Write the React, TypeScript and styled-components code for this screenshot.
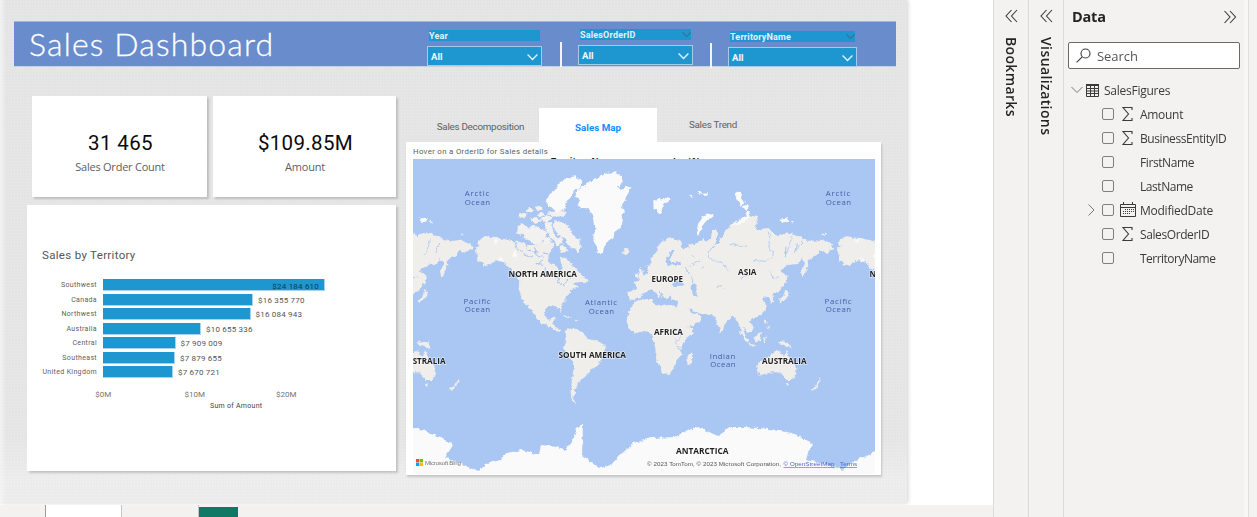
import React from "react";
import styled, { createGlobalStyle } from "styled-components";

const DIN = `Roboto, "Noto Sans", sans-serif`;
const UI = `"Open Sans", "Noto Sans", sans-serif`;

const GlobalStyle = createGlobalStyle`
  * { box-sizing: border-box; }
  body { margin: 0; overflow: hidden; background: #fff; font-family: ${UI}; }
`;

const Shell = styled.div`
  width: 1257px;
  height: 517px;
  display: flex;
  overflow: hidden;
  background: #f3f2f1;
`;

const Workspace = styled.main`
  width: 993px;
  height: 517px;
  display: flex;
  flex-direction: column;
  background: #fff;
`;

const ReportPage = styled.div`
  width: 907px;
  height: 503px;
  flex: none;
  padding-top: 22px;
  background:
    linear-gradient(90deg, #f3f3f3 0, rgba(235, 235, 235, 0) 6px),
    radial-gradient(circle at 1px 1px, rgba(0, 0, 0, 0.015) 0.6px, transparent 1px) 0 0 / 3px 3px,
    linear-gradient(#e6e6e6 0, #e7e7e7 440px, #eeeeee 480px, #ededed 503px);
  box-shadow: 1px 0 4px rgba(0, 0, 0, 0.18);
`;

const Banner = styled.header`
  display: flex;
  align-items: flex-start;
  width: 882px;
  height: 44px;
  margin-left: 14px;
  background: #698ccd;
  box-shadow: 0 -1px 0 #a3b4d8, 0 1px 0 #c9d0e0;
`;

const Title = styled.h1`
  width: 413px;
  margin: 0;
  padding-left: 15px;
  font: 300 32px/44px Lato, sans-serif;
  letter-spacing: 1.15px;
  color: #fff;
  white-space: nowrap;
  -webkit-text-stroke: 0.3px #fff;
`;

const Slicer = styled.div<{ $w: number; $top: number }>`
  display: flex;
  flex-direction: column;
  gap: 5px;
  width: ${(p) => p.$w}px;
  padding-top: ${(p) => p.$top}px;
`;

const SlicerLabel = styled.div`
  display: flex;
  justify-content: space-between;
  align-items: center;
  height: 11px;
  margin: 0 2px;
  background: #1e96d0;
  font: 700 9px/12px ${DIN};
  letter-spacing: 0.18px;
  color: #e4f1f8;
`;

const SlicerBox = styled.div`
  display: flex;
  justify-content: space-between;
  align-items: center;
  height: 20px;
  padding: 1px 3px 0;
  border: 1px solid #a5cbe9;
  background: #1e96d0;
  font: 700 9.5px/18px ${DIN};
  letter-spacing: 0.1px;
  color: #f2f9fd;
`;

const Divider = styled.div<{ $top: number; $before: number }>`
  width: 2px;
  height: 25px;
  margin: ${(p) => p.$top}px 16px 0 ${(p) => p.$before}px;
  flex: none;
  background: #f3f5fa;
`;

const Body = styled.div`
  display: flex;
  gap: 10px;
  padding: 30px 0 0 27px;
`;

const LeftColumn = styled.section`
  width: 369px;
`;

const CardRow = styled.div`
  display: flex;
  justify-content: space-between;
  padding-left: 5px;
  margin-bottom: 8px;
`;

const Card = styled.div<{ $w: number }>`
  width: ${(p) => p.$w}px;
  height: 101px;
  padding-top: 34px;
  text-align: center;
  background: #fff;
  box-shadow: 2px 2px 2px rgba(0, 0, 0, 0.17);
`;

const CardValue = styled.div`
  font: 400 20.5px/26px ${DIN};
  letter-spacing: 0.35px;
  padding-left: 2px;
  color: #0a0a0a;
`;

const CardLabel = styled.div`
  font: 400 11px/15px ${UI};
  margin-top: 3px;
  padding-left: 1px;
  letter-spacing: -0.23px;
  color: #606060;
`;

const ChartCard = styled.div`
  height: 266px;
  padding: 42px 11px 0 15px;
  background: #fff;
  box-shadow: 2px 2px 2px rgba(0, 0, 0, 0.17);
`;

const ChartTitle = styled.h2`
  margin: 0;
  font: 400 11.5px/16px ${DIN};
  letter-spacing: 0.32px;
  color: #555;
`;

const Plot = styled.div`
  display: flex;
  justify-content: space-between;
  margin-top: 7px;
`;

const Bars = styled.div`
  padding-top: 8px;
`;

const BarRow = styled.div`
  display: grid;
  grid-template-columns: 55px auto 80px;
  column-gap: 6px;
  justify-content: start;
  align-items: center;
  height: 14.5px;
`;

const Category = styled.span`
  justify-self: end;
  font: 400 7px/12px ${DIN};
  letter-spacing: 0.34px;
  color: #606060;
  white-space: nowrap;
`;

const Bar = styled.div`
  display: flex;
  justify-content: flex-end;
  align-items: center;
  height: 12px;
  border: solid #a9d3ea;
  border-width: 0 1px 1px 0;
  background: #1e96d0;
  padding: 3px 5px 0 0;
`;

const Amount = styled.span<{ $inside?: boolean }>`
  font: 400 8px/11px ${DIN};
  letter-spacing: 0.2px;
  padding-top: ${(p) => (p.$inside ? 0 : 1)}px;
  margin-left: -1px;
  white-space: nowrap;
  color: ${(p) => (p.$inside ? "#0d3d58" : "#555")};
`;

const ScrollTrack = styled.div`
  width: 5px;
  height: 116px;
  border-radius: 3px;
  background: #efefef;
`;

const ScrollThumb = styled.div`
  height: 80px;
  border-radius: 3px;
  background: #b5b5b5;
`;

const Axis = styled.div`
  display: flex;
  margin: 3px 0 0 38px;
  font: 400 8px/11px ${DIN};
  letter-spacing: 0.05px;
  color: #757575;
  span { width: 91.5px; text-align: center; margin-left: -22.5px; margin-right: 22.5px; }
`;

const AxisTitle = styled.div`
  margin: 0 0 0 168px;
  font: 400 7px/12px ${DIN};
  letter-spacing: 0.28px;
  color: #444;
`;

const RightColumn = styled.section`
  width: 475px;
  padding-top: 12px;
`;

const Tabs = styled.nav`
  display: flex;
  height: 34px;
  padding-left: 16px;
`;

const Tab = styled.div<{ $w: number; $top: number; $active?: boolean }>`
  width: ${(p) => p.$w}px;
  padding-top: ${(p) => p.$top}px;
  text-align: center;
  font: ${(p) => (p.$active ? 700 : 400)} 9.8px/14px ${DIN};
  letter-spacing: ${(p) => (p.$active ? 0 : -0.25)}px;
  color: ${(p) => (p.$active ? "#118dff" : "#606060")};
  background: ${(p) => (p.$active ? "#fff" : "transparent")};
`;

const MapCard = styled.div`
  height: 333px;
  padding: 5px 6px 0 7px;
  background: #fff;
  box-shadow: 1px 2px 2px rgba(0, 0, 0, 0.17);
`;

const HintRow = styled.div`
  height: 10px;
  font: 400 7.8px/9px ${DIN};
  letter-spacing: 0.33px;
  color: #606060;
`;

const ClippedHeads = styled.div`
  display: flex;
  height: 2px;
  overflow: hidden;
  padding-left: 138px;
  font: 700 9px/7px ${UI};
  color: #222;
  span { width: 122px; }
`;

const MapSvg = styled.svg`
  display: block;
  width: 462px;
  height: 315px;
`;

const PageTabs = styled.footer`
  display: flex;
  height: 12px;
  margin-top: 2px;
  padding-left: 45px;
  background: #f3f2f1;
`;

const PageTab = styled.div<{ $w: number; $active?: boolean }>`
  width: ${(p) => p.$w}px;
  border-left: 1px solid ${(p) => (p.$active ? "#9d9b99" : "#c8c6c4")};
  background: ${(p) => (p.$active ? "#fff" : "#f3f2f1")};
`;

const AddPage = styled.div`
  width: 39px;
  height: 10px;
  margin-top: 2px;
  background: #117865;
`;

const Rail = styled.aside`
  display: flex;
  flex-direction: column;
  align-items: center;
  width: 35px;
  padding-top: 9px;
  gap: 14px;
  border-left: 1px solid #dddbd9;
  background: #f3f2f1;
`;

const RailText = styled.span<{ $ls: number }>`
  writing-mode: vertical-rl;
  font: 600 14px/18px ${UI};
  letter-spacing: ${(p) => p.$ls}px;
  color: #252423;
`;

const DataPane = styled.aside`
  width: 186px;
  border-left: 1px solid #dddbd9;
  border-right: 1px solid #e1dfdd;
  padding: 9px 0 0 4px;
  background: linear-gradient(90deg, #f3f2f1 180px, #f8f7f7 180px);
`;

const PaneHead = styled.div`
  display: flex;
  justify-content: space-between;
  align-items: center;
  height: 15px;
  padding: 0 11px 0 4px;
  font: 700 14.5px/16px ${UI};
  letter-spacing: -0.2px;
  color: #252423;
`;

const SearchBox = styled.div`
  display: flex;
  align-items: center;
  gap: 6px;
  width: 172px;
  height: 27px;
  margin: 18px 0 9px;
  padding-left: 7px;
  border: 1px solid #6b6967;
  border-radius: 2px;
  background: #fff;
  font: 400 13px/24px ${UI};
  letter-spacing: -0.05px;
  color: #555;
`;

const Row = styled.div`
  display: grid;
  grid-template-columns: 17px 18px 20px auto;
  align-items: center;
  height: 24px;
  padding-left: 17px;
  font: 400 12px/22px ${UI};
  color: #3b3a39;
`;

const TableRow = styled(Row)`
  grid-template-columns: 15px 18px auto;
  padding-left: 3px;
`;

const Label = styled.span<{ $ls: number }>`
  padding-top: 2px;
  letter-spacing: ${(p) => p.$ls}px;
`;

const Check = styled.span`
  width: 12px;
  height: 12px;
  border: 1px solid #807e7c;
  border-radius: 2px;
`;

const Chevrons = ({ right }: { right?: boolean }) => (
  <svg width="14" height="14" viewBox="0 0 14 14" fill="none" stroke="#3b3a39" strokeWidth="1.1">
    <path d={right ? "M1.500 1l5.500 6-5.500 6M7 1l5.500 6L7 13" : "M13 1L7.500 7l5.500 6M7.500 1L2 7l5.500 6"} />
  </svg>
);

const Caret = ({ dim }: { dim?: boolean }) => (
  <svg width={dim ? 9 : 11} height={dim ? 7 : 8} viewBox="0 0 11 8" fill="none" stroke={dim ? "#3f6c8a" : "#e6f4fb"} strokeWidth="1.3">
    <path d="M.6 1.500l4.900 5 4.900-5" />
  </svg>
);

const Sigma = () => (
  <svg width="14" height="16" viewBox="0 0 14 16" fill="none" stroke="#3b3a39" strokeWidth="1.1">
    <path d="M12 4V1.500H3L8.500 8 3 14.500h9V12" />
  </svg>
);

const Calendar = () => (
  <svg width="17" height="16" viewBox="0 0 17 16" fill="none" stroke="#3b3a39">
    <path d="M.5 2.500h15v12H.5zM.5 5.500h15M3.500 0v3M12.500 0v3" />
    <path d="M5 7.500h9M3 9.500h11M3 11.500h8" strokeDasharray="1 1" />
  </svg>
);

const TableIcon = () => (
  <svg width="13" height="13" viewBox="0 0 13 13" fill="none" stroke="#3b3a39">
    <path d="M.5 1h12v11.500H.5zM.5 4.500h12M.5 7h12M.5 9.500h12M4.500 1v11.500M8.500 1v11.500" />
    <path d="M0 1h13" strokeWidth="2" />
  </svg>
);

const SearchIcon = () => (
  <svg width="15" height="15" viewBox="0 0 15 15" fill="none" stroke="#3b3a39" strokeWidth="1.1">
    <circle cx="9.500" cy="5.500" r="4.500" />
    <path d="M6.200 8.800L.6 14.300" />
  </svg>
);

/* Western hemisphere, drawn at three units per map pixel. */
const WEST_LAND = [
  "M212 297l12-8-9-12 14-14 14-5 18 5 24 1 36 9 28 3 15 9 24 0 22-6 14-10 8 14 11-9 5 13-10 16-8 16 3 20 20 5 7 15 8 4 3-19-7-20 15-1 15 10 10 12 15 15 20 24-8 12-28 2 20 14-21 5-10 11-6 15-8 9-9 14 2 21-6-8-9-11-24 1-11 9-1 18 10 14 10-6 11-5-4 15-6 6 8 9 12 5 5 12-10-3-16-8-20-12-14-4-11-13-14-25-18-17-12-18-8-20 3-30-14-25-21-20-10-15-14-6-16 4-20 11-24 6 9-14-21-6 4-11z",
  "M482 541l13-6 20 3 16 7 14 17 17 7 23 8 20 12-5 17-10 25-14 15-16 15-15 15-11 10-14 10-8 24-7 20 8 22-12-7-4-30 4-35 5-30-2-25-18-20-10-25 7-25z",
  "M651 305l8-8 14 1 3 9-12 8-12-3z",
  "M470 495l18 3 14 7-14-1zM508 506l12 1 4 4-12 0zM532 380l14 4 6 12-12 4-12-9z",
];
const ARCTIC_ISLES = [
  "M337 232l14-12 15 9 5 12 17 7-9 10-25-2-17-5zM356 246l24-19 24 4 12 20-4 28-22 5-17-13-20-4z",
  "M340 198l16-11 12 6-10 12zM362 180l14-7 13 6-13 11zM370 208l24-8 18 10-20 12zM390 172l16-7 8 11-16 8zM408 206l18-13 19 11-23 13zM396 192l15-5 10 7-18 8zM418 218l20-2 8 32-22 2z",
  "M442 226l12-16 20 10 22 14 9 22 17 11 6 22-7 16-20-12-13-7-5-18-22-11-10-16zM448 262l20 0 9 19-22 8-8-12zM460 290l17-2 14 15-21 6z",
  "M425 189l28-7 32 4-8 14-33-1zM400 240l16-4 11 18-14 20-14-9zM430 252l16-5 8 16-14 9zM412 268l18-6 10 14-16 8z",
];
const WHITE_WEST = [
  "M424 160l8-25 18-15 10-20 20-14 28-7 24 13-6 18-20 12-8 20-14 12-6 24-23 12-14-14z",
  "M518 116l30-14 16-16 25-8 19-10 26-1 18 16 1 16-15 11 10 10 18-11 14 4-12 22-10 20-9 18 10 6-9 25 3 20-16 16-13 23-12 7-14 20-5 19-14 1-3-20-11-16 1-23 9-14-9-14-3-26-14-22-21-1-12-13 10-10-16-8z",
];
/* Eastern hemisphere, same scale. */
const EAST_LAND = [
  "M35 342l-4-19 18-16 4-17 12-15 16-11 14-2 14 8 17 3 4 11-10 5 12 10 13-9 5 7-5-15 15 2 11-6 20-11 9 7 13-9 3-25 12-3 5 18-7 28 10-3 5-18 10-1 2-16 18-10 2-11 18-12 16-5 16-13 27 7 5 16-10 16 15 7 30-3 10 14 15 8 15-7 15-6 20 10 20 4 15 12 25 0 20-3 30 15 8 14-13 3-10 10-20-10-10 18-20 7-7 5 2 16-10 25-8 10-4-20 12-24-10-11-10 15-25 2-20 9-7 12 20 12-6 21-17 24-15 6-8 6 3 18-7 6-6-16-12-4-8 8 10 18-3 18-17 17-20 8-10 8 14 14-4 16-13 3-12-18-2 11 9 20 9 11-5 3-10-6-12-23 0-15-10-20-10-15-12 10-15 15-5 20-7 7-11-32-7-13-10-7-25-3-18-4-14-8-12-8 9 16 19 4 13 8-7 16-32 14-13-3-10-18-13-22-2-11 5-8 3-15-23-6-3-12-7 9-8 3-5-11-10-9-12-7 10 12 7 9-8-1-14-14-8-7-12 0-16 10-12 15-15 5-16-2-3-20 26-9 0-13-5-9 18-8 15-13 8-11 3-18-16 4z",
  "M-15 453l35-6 18 0 2 13 25 7 25-2 18 3 7 19 15 28 10 15 20 3-5 17-25 25-5 20 3 18-18 17-5 20-17 22-20 3-8-20-12-30 2-25-10-25-2-20-23-12-30 7-17-15-8-20 2-20 13-25z",
  "M155 607l5 10-8 26-10-2 1-20z",
  "M352 640l20-10 10-8 8-12 10 3 10-13 12 3-2 10 12 7 6-20 7 15 13 20 12 22-2 18-10 15-18 0-10-10-12-13-23 0-25 6-12 4-3-12-3-15z",
  "M437 700l8-2 2 8-5 5z",
  "M415 573l15 2 15 2 10 16-15-3-15-5z",
  "M340 565l15-15 8-5 2 8-5 17-12 5zM300 543l15 17 13 17-10-2zM325 580l20 5 5 5-22-5zM370 562l12-6-7 8 5 10-8 3zM374 509l7 1 2 14-7-3zM382 530l8 1-3 9z",
  "M538 683l4 12-17 22-10 5-3-5 20-14z",
  "M432 435l3-15 8 3 3 12-10 14-17 8-4-4z",
  "M0 350l7 8 2 15 5 10-14 6-8-3 6-14zM-14 370l8-2 0 12-9 3z",
];
const WHITE_EAST = [
  "M215 190l4 8-18 13-15 18-8 28-10-8 7-29 18-24z",
  "M40 153l20-10 4 9 10-13 18 8-8 10-15 5-4 22-8 9-6-12-10-3zM146 134l14 2-4 6zM170 127l14-3 0 8-11 3zM188 128l16-1-4 11-11-1zM285 130l11-7 10 10-3 12 12 15-12 7-11-16-6-7zM308 170l12-8 6 12-8 6zM316 188l10-4 5 11-9 6zM422 206l18-3 5 10-19 6zM452 212l11 3-7 6zM546 251l11 1-3 6z",
];
const EAST_WATER = [
  "M94 335l-5-14 16-18-7-4-20 24 5 25 20-4 20-2-4-6zM98 398l16-10 10 6 12 8-5 5-30 1zM154 408l8-8 8 5-2 12 4 22-10 1-6-16z",
  "M64 375l5 1M177 408l8-2",
];
const EAST_RIVERS =
  "M230 280l-20 20-5 22 22 12 20 4 18 22M385 245l5 20-4 25 14 18-4 16-18 10-32-3-8 4M455 260l-4 20-8 22-8 18M490 272l-12 12-8 22M300 385l15-7 12-3 15-8M230 410l12-3 6 6M388 365l12 18 17-2M150 350l12-12 18-8M133 345l12 25 14 12-2 18M270 285l12-4 16 9 20-2M180 355l14-8M155 315l8 8M100 535l18 5 2 22-8 10M106 565l5 5 0 14M108 590l20 12";
const WEST_RIVERS =
  "M330 275l7 24 14 5M360 285l10 18 20 5 12-6M355 310l16 10 12-4M390 290l3 25 22 4M410 330l-12 15M422 352l-3 18M415 308l14 5M392 340l22 3M445 378l18 8-6 11 18 5 3 9M495 385l-22 18M60 290l-2 24M95 280l-10 28";
const ANTARCTICA =
  "M405 427L413 428 425 430 431 434 440 437 453 445 448 453 445 458 459 462 478 472 487 463 500 459 507 453 522 450 539 455 541 445 552 446 565 450 574 438 577 428 583 423 582 455 590 461 600 468 611 465 620 455 634 443 651 438 675 437 688 430 698 427 718 436 731 427 746 427 780 430 798 435 813 444 808 453 806 460 825 464 843 470 858 459 875 452L890 450V480H405z";

const Paths = ({ items, fill }: { items: string[]; fill: string }) => (
  <>
    {items.map((d) => (
      <path key={d.slice(0, 14)} d={d} fill={fill} />
    ))}
  </>
);

const Ocean = ({ x, y, name, w }: { x: number; y: number; name: string; w: number }) => (
  <g fontFamily={UI} fontSize="7.800" fill="#4660a8" textAnchor="middle">
    <text x={x} y={y} textLength={w}>{name}</text>
    <text x={x + 0.4} y={y + 8.500} textLength="25.500">Ocean</text>
  </g>
);

const CONTINENTS: [string, number, number, number][] = [
  ["NORTH AMERICA", 508.500, 277.300, 68.500],
  ["SOUTH AMERICA", 558.500, 357.800, 67.500],
  ["EUROPE", 651.500, 281.700, 31.500],
  ["ASIA", 738, 274.700, 18.500],
  ["AFRICA", 654, 335.300, 29],
  ["AUSTRALIA", 762, 363.500, 44.500],
  ["AUSTRALIA", 401, 363.500, 44.500],
  ["NORTH AMERICA", 869.500, 277.300, 68.500],
  ["ANTARCTICA", 676, 453.800, 52.500],
];

const WorldMap = () => (
  <MapSvg viewBox="413 159 462 315">
    <defs>
      <filter id="coast" x="-5%" y="-5%" width="110%" height="110%">
        <feTurbulence type="fractalNoise" baseFrequency="0.22" numOctaves="3" seed="4" />
        <feDisplacementMap in="SourceGraphic" scale="4.5" xChannelSelector="R" yChannelSelector="G" />
      </filter>
      <g id="world">
        <g transform="translate(405 150) scale(.33333)">
          <Paths items={WEST_LAND} fill="#efeeeb" />
          <Paths items={ARCTIC_ISLES} fill="#f2f1ef" />
          <Paths items={WHITE_WEST} fill="#fafafa" />
          <path d="M262 272l22-4-12 12zM272 328l18-4 10 14zM326 300l8 4-2 18-8-6z" fill="#fafafa" />
          <path d={WEST_RIVERS} fill="none" stroke="#a9c5f1" strokeWidth="3" />
        </g>
        <g transform="translate(640 150) scale(.33333)">
          <Paths items={EAST_LAND} fill="#efeeeb" />
          <Paths items={WHITE_EAST} fill="#fafafa" />
          <path d="M274 228l20-14 22-16 12 4-14 14-22 8z" fill="#fafafa" />
          <Paths items={EAST_WATER} fill="#aac6f2" />
          <path d={EAST_RIVERS} fill="none" stroke="#a9c5f1" strokeWidth="2.400" />
        </g>
      </g>
    </defs>
    <rect x="413" y="159" width="462" height="315" fill="#aac6f2" />
    <g filter="url(#coast)">
      <use href="#world" />
      <use href="#world" x="-361" />
      <use href="#world" x="361" />
      <path d={ANTARCTICA} fill="#fafafa" />
    </g>
    <Ocean x={477} y={196.300} name="Arctic" w={24.500} />
    <Ocean x={838} y={196.300} name="Arctic" w={24.500} />
    <Ocean x={477} y={303.500} name="Pacific" w={27} />
    <Ocean x={838} y={303.500} name="Pacific" w={27} />
    <Ocean x={601} y={305} name="Atlantic" w={32} />
    <Ocean x={722.500} y={358.500} name="Indian" w={25.500} />
    <g fontFamily={UI} fontSize="9" fontWeight="700" fill="#1f1f1f" stroke="#fff" strokeOpacity=".6" strokeWidth="1.300" paintOrder="stroke">
      {CONTINENTS.map(([name, x, y, w]) => (
        <text key={name + x} x={x} y={y} textLength={w} lengthAdjust="spacingAndGlyphs">{name}</text>
      ))}
    </g>
    <g>
      <path d="M416 459h3.300v3.300H416z" fill="#f25022" />
      <path d="M419.700 459h3.300v3.300h-3.300z" fill="#7fba00" />
      <path d="M416 462.700h3.300v3.300H416z" fill="#00a4ef" />
      <path d="M419.700 462.700h3.300v3.300h-3.300z" fill="#ffb900" />
    </g>
    <g fontFamily='"Liberation Sans", sans-serif' fontSize="6.200" fill="#555">
      <text x="425" y="465" textLength="36" fill="#777">Microsoft Bing</text>
      <text x="647" y="466" textLength="134">© 2023 TomTom, © 2023 Microsoft Corporation,</text>
      <g fill="#4a66c4" textDecoration="underline">
        <text x="783.500" y="466" textLength="51">© OpenStreetMap</text>
        <text x="840" y="466" textLength="17">Terms</text>
      </g>
    </g>
  </MapSvg>
);

const SALES = [
  { name: "Southwest", w: 222, amount: "$24 184 610" },
  { name: "Canada", w: 150, amount: "$16 355 770" },
  { name: "Northwest", w: 147.500, amount: "$16 084 943" },
  { name: "Australia", w: 98, amount: "$10 655 336" },
  { name: "Central", w: 72.500, amount: "$7 909 009" },
  { name: "Southeast", w: 72, amount: "$7 879 655" },
  { name: "United Kingdom", w: 70, amount: "$7 670 721" },
];

const FIELDS = [
  { name: "Amount", icon: "sum", ls: -0.3 },
  { name: "BusinessEntityID", icon: "sum", ls: -0.42 },
  { name: "FirstName", icon: "", ls: -0.4 },
  { name: "LastName", icon: "", ls: -0.45 },
  { name: "ModifiedDate", icon: "date", ls: -0.25 },
  { name: "SalesOrderID", icon: "sum", ls: -0.4 },
  { name: "TerritoryName", icon: "", ls: -0.52 },
];

const Filter = ({ label, w, top, dim }: { label: string; w: number; top: number; dim?: boolean }) => (
  <Slicer $w={w} $top={top}>
    <SlicerLabel>{label}{dim && <Caret dim />}</SlicerLabel>
    <SlicerBox>All<Caret /></SlicerBox>
  </Slicer>
);

export default function App() {
  return (
    <Shell>
      <GlobalStyle />
      <Workspace>
        <ReportPage>
          <Banner>
            <Title>Sales Dashboard</Title>
            <Filter label="Year" w={115} top={8} />
            <Divider $top={20} $before={18} />
            <Filter label="SalesOrderID" w={115} top={7} dim />
            <Divider $top={21} $before={17} />
            <Filter label="TerritoryName" w={129} top={9} dim />
          </Banner>
          <Body>
            <LeftColumn>
              <CardRow>
                <Card $w={175}>
                  <CardValue>31 465</CardValue>
                  <CardLabel>Sales Order Count</CardLabel>
                </Card>
                <Card $w={183}>
                  <CardValue>$109.85M</CardValue>
                  <CardLabel>Amount</CardLabel>
                </Card>
              </CardRow>
              <ChartCard>
                <ChartTitle>Sales by Territory</ChartTitle>
                <Plot>
                  <Bars>
                    {SALES.map((s, i) => (
                      <BarRow key={s.name}>
                        <Category>{s.name}</Category>
                        <Bar style={{ width: s.w }}>{i === 0 && <Amount $inside>{s.amount}</Amount>}</Bar>
                        {i > 0 && <Amount>{s.amount}</Amount>}
                      </BarRow>
                    ))}
                  </Bars>
                  <ScrollTrack><ScrollThumb /></ScrollTrack>
                </Plot>
                <Axis><span>$0M</span><span>$10M</span><span>$20M</span></Axis>
                <AxisTitle>Sum of Amount</AxisTitle>
              </ChartCard>
            </LeftColumn>
            <RightColumn>
              <Tabs>
                <Tab $w={117} $top={12}>Sales Decomposition</Tab>
                <Tab $w={118} $top={13} $active>Sales Map</Tab>
                <Tab $w={112} $top={10}>Sales Trend</Tab>
              </Tabs>
              <MapCard>
                <HintRow>Hover on a OrderID for Sales details</HintRow>
                <ClippedHeads><span>TerritoryName</span><span>LastName</span></ClippedHeads>
                <WorldMap />
              </MapCard>
            </RightColumn>
          </Body>
        </ReportPage>
        <PageTabs>
          <PageTab $w={76} $active />
          <PageTab $w={77} />
          <PageTab $w={1} />
          <AddPage />
        </PageTabs>
      </Workspace>
      <Rail><Chevrons /><RailText $ls={0.35}>Bookmarks</RailText></Rail>
      <Rail><Chevrons /><RailText $ls={0.4}>Visualizations</RailText></Rail>
      <DataPane>
        <PaneHead>Data<Chevrons right /></PaneHead>
        <SearchBox><SearchIcon />Search</SearchBox>
        <TableRow>
          <svg width="12" height="8" viewBox="0 0 12 8" fill="none" stroke="#797775"><path d="M.5 1L6 6.500 11.500 1" /></svg>
          <TableIcon />
          <Label $ls={-0.25}>SalesFigures</Label>
        </TableRow>
        {FIELDS.map((f) => (
          <Row key={f.name}>
            {f.icon === "date" ? (
              <svg width="10" height="12" viewBox="0 0 10 12" fill="none" stroke="#797775"><path d="M3.500 .5L9 6l-5.500 5.500" /></svg>
            ) : <span />}
            <Check />
            {f.icon === "sum" ? <Sigma /> : f.icon === "date" ? <Calendar /> : <span />}
            <Label $ls={f.ls}>{f.name}</Label>
          </Row>
        ))}
      </DataPane>
    </Shell>
  );
}
